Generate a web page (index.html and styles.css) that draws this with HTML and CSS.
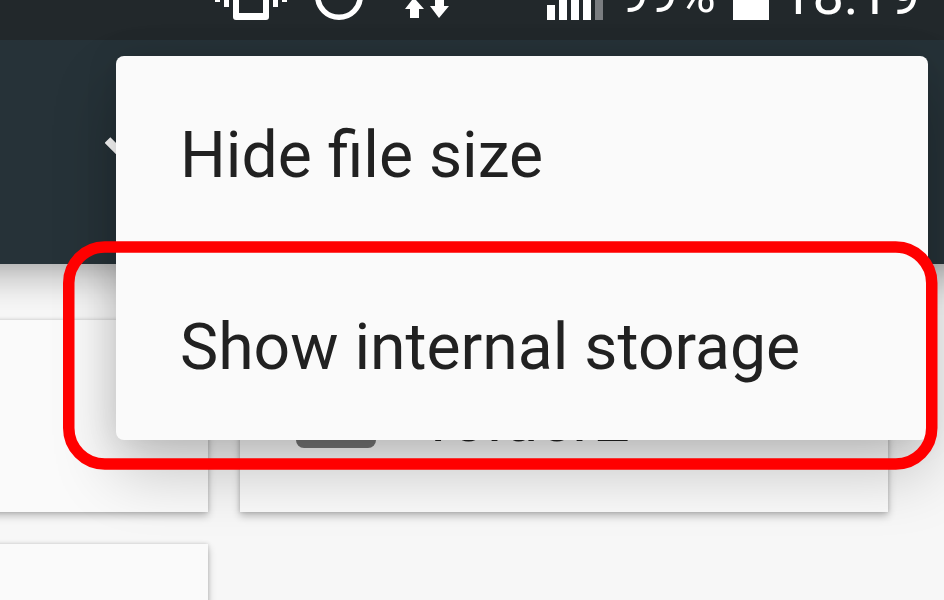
FILE: index.html
```html
<!DOCTYPE html>
<html lang="en">
<head>
<meta charset="utf-8">
<title>File menu</title>
<link rel="stylesheet" href="styles.css">
</head>
<body>
<div class="screen">
  <header class="status">
    <svg class="status-icons" width="250" height="40" viewBox="0 0 250 40" fill="#fff">
      <path d="M15 0h5v2h-5zM24 0h5v7h-5zM73 0h5v7h-5zM82 0h5v2h-5z"/>
      <path d="M33 0h6v13h24V0h6v17q0 3-3 3H36q-3 0-3-3z"/>
      <circle cx="139" cy="-4" r="21.3" fill="none" stroke="#fff" stroke-width="5.4"/>
      <path d="M212 0h4l8 9h-5v9h-9V9h-5zM235 0h9v6h5l-10 12-9-12h5z"/>
    </svg>
    <svg class="signal" width="57" height="40" viewBox="0 0 57 40" fill="#fff">
      <path d="M0 5h8v15H0zM12 0h8v20h-8zM24 0h8v20h-8zM36 0h8v20h-8z"/>
      <path d="M48 0h8v20h-8z" fill="#7a7d80"/>
    </svg>
    <span class="percent">99%</span>
    <span class="battery"></span>
    <span class="clock">18:19</span>
  </header>
  <div class="toolbar">
    <svg width="40" height="24" viewBox="0 0 40 24"><path d="M2.5 3 20 20.500 37.500 3" fill="none" stroke="#fff" stroke-width="8"/></svg>
  </div>
  <main class="files">
    <div class="card bleed"></div>
    <div class="card named">
      <span class="folder"></span>
      <span class="name">folder2</span>
    </div>
    <div class="card bleed"></div>
  </main>
  <div class="menu">
    <div class="item">Hide file size</div>
    <div class="item">Show internal storage</div>
  </div>
  <svg class="highlight" width="875" height="230" viewBox="0 0 875 230">
    <rect x="5.75" y="6.1" width="863" height="217" rx="36" fill="none" stroke="#f00" stroke-width="11.5"/>
  </svg>
</div>
</body>
</html>
```
FILE: styles.css
```css
* { box-sizing: border-box; }
body { margin: 0; font-family: Roboto, sans-serif; }
.screen {
  position: relative;
  width: 944px;
  height: 600px;
  overflow: hidden;
  background: #f7f7f7;
  display: flex;
  flex-direction: column;
}
.status {
  position: relative;
  z-index: 2;
  flex: none;
  display: flex;
  align-items: flex-start;
  height: 40px;
  padding-left: 200px;
  overflow: hidden;
  background: #22282b;
  color: #fff;
}
.status-icons, .signal { flex: none; }
.signal { margin-left: 97px; }
.percent {
  width: 110px;
  margin: -33px 0 0 16px;
  font-size: 51.5px;
  line-height: 56px;
}
.battery {
  flex: none;
  width: 36px;
  height: 20px;
  margin-left: 3px;
  background: #fff;
}
.clock {
  margin: -33px 0 0 12px;
  font-size: 56px;
  line-height: 56px;
}
.toolbar {
  position: relative;
  z-index: 1;
  flex: none;
  height: 224px;
  margin: 0 -48px;
  padding: 97px 0 0 153px;
  background: #263238;
  box-shadow: 0 16px 32px rgba(0, 0, 0, .24), 0 0 16px rgba(0, 0, 0, .12);
}
.toolbar svg { display: block; }
.files {
  display: grid;
  grid-template-columns: 208px 648px;
  grid-auto-rows: 192px;
  gap: 32px;
  padding-top: 56px;
}
.card {
  background: #fafafa;
  box-shadow: 0 4px 8px rgba(0, 0, 0, .24), 0 0 4px rgba(0, 0, 0, .16);
}
.bleed { margin-left: -16px; }
.named {
  display: flex;
  align-items: center;
  padding-left: 56px;
}
.folder {
  width: 80px;
  height: 64px;
  border-radius: 8px;
  background: #757575;
}
.name {
  margin: 8px 0 0 52px;
  font-size: 64px;
  line-height: 76px;
  color: #212121;
}
.menu {
  position: absolute;
  z-index: 3;
  left: 116px;
  top: 56px;
  width: 812px;
  height: 384px;
  border-radius: 8px;
  background: #fafafa;
  box-shadow: 0 32px 64px rgba(0, 0, 0, .22), 0 0 32px rgba(0, 0, 0, .1);
}
.item {
  height: 192px;
  padding: 3px 0 0 64px;
  font-size: 64.25px;
  line-height: 192px;
  color: #212121;
  white-space: nowrap;
}
.highlight {
  position: absolute;
  z-index: 4;
  left: 63px;
  top: 241px;
}
```
